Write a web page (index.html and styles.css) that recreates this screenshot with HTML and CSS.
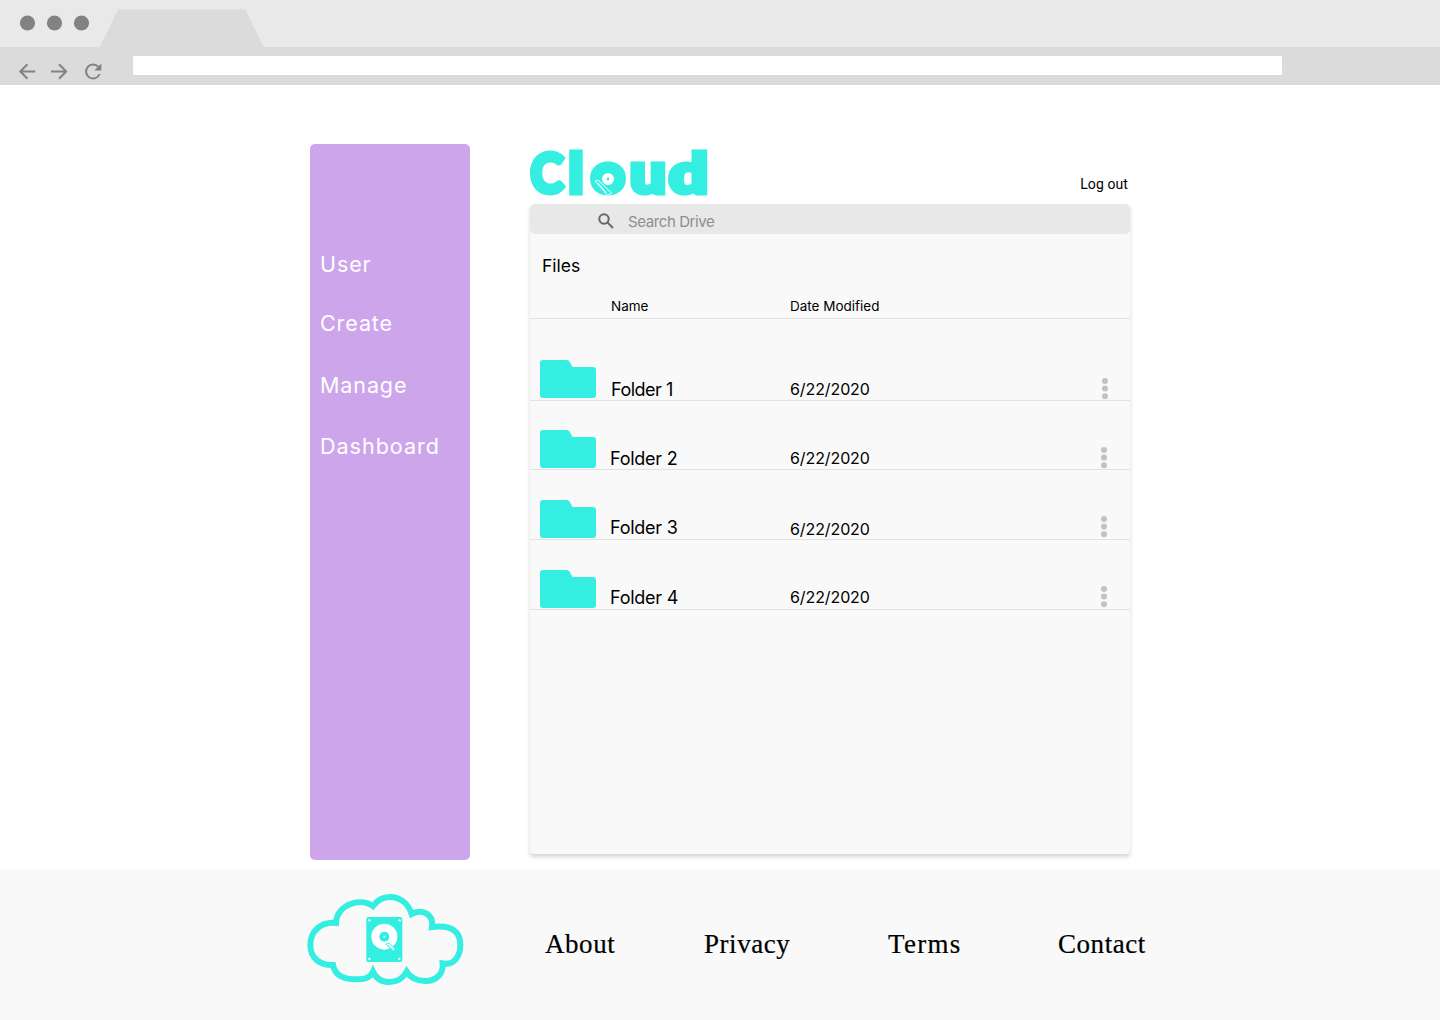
FILE: index.html
```html
<!DOCTYPE html>
<html lang="en">
<head>
<meta charset="utf-8">
<title>Cloud Drive</title>
<link rel="stylesheet" href="styles.css">
</head>
<body>
<svg class="defs" width="0" height="0" aria-hidden="true">
  <symbol id="folder" viewBox="0 0 56 38">
    <path d="M3 0H26.500Q28.500 0 29.500 1.500L32.500 7H53Q56 7 56 10V35Q56 38 53 38H3Q0 38 0 35V3Q0 0 3 0Z"/>
  </symbol>
  <symbol id="dots" viewBox="0 0 6 22">
    <circle cx="3" cy="3" r="3"/><circle cx="3" cy="10.600" r="3"/><circle cx="3" cy="18.200" r="3"/>
  </symbol>
</svg>
<header class="browser">
  <div class="tabs">
    <svg width="1440" height="47" viewBox="0 0 1440 47">
      <g fill="#828282"><circle cx="27.500" cy="23" r="7.600"/><circle cx="54.500" cy="23" r="7.600"/><circle cx="81.500" cy="23" r="7.600"/></g>
      <path d="M100 47L118 9.500H245.500L263.500 47Z" fill="#dbdbdb"/>
    </svg>
  </div>
  <div class="toolbar">
    <svg class="nav-icons" width="133" height="38" viewBox="0 47 133 38" fill="none" stroke="#828282" stroke-width="2">
      <path d="M35.300 71.500H20.500M27.500 64.300L20.300 71.500L27.500 78.700"/>
      <path d="M51 71.500H66M59 64.300L66.200 71.500L59 78.700"/>
      <path d="M99.600 74A7 7 0 1 1 98.300 66.800"/>
      <path d="M101.300 63.500V70.500H94.300Z" fill="#828282" stroke="none"/>
    </svg>
    <div class="address"></div>
  </div>
</header>
<main class="page">
  <nav class="sidebar">
    <a class="user">User</a>
    <a class="create">Create</a>
    <a class="manage">Manage</a>
    <a class="dashboard">Dashboard</a>
  </nav>
  <section class="content">
    <div class="masthead">
      <svg class="logo" width="190" height="60" viewBox="525 144 190 60">
        <g class="wordmark">
          <text x="530.500" y="192.500" textLength="33" lengthAdjust="spacingAndGlyphs">C</text>
          <text x="568.500" y="192.500" textLength="15" lengthAdjust="spacingAndGlyphs">l</text>
          <text x="591" y="192.500" textLength="34" lengthAdjust="spacingAndGlyphs">o</text>
          <text x="630" y="192.500" textLength="36" lengthAdjust="spacingAndGlyphs">u</text>
          <text x="669" y="192.500" textLength="39" lengthAdjust="spacingAndGlyphs">d</text>
        </g>
        <circle cx="608" cy="179" r="12" fill="#35eee2"/>
        <circle cx="608" cy="179" r="6" fill="#fff"/>
        <circle cx="608" cy="179" r="1.500" fill="#35eee2"/>
        <path d="M595 181Q597 179 599 181L611.500 193L608 195.500Q605 194 604 191Z" fill="#35eee2" stroke="#fff"/>
        <path d="M598 183L606.500 193" stroke="#fff" fill="none"/>
      </svg>
      <a class="logout">Log out</a>
    </div>
    <div class="drive">
      <div class="search">
        <svg width="16" height="16" viewBox="0 0 16 16" fill="none" stroke="#666" stroke-width="2"><circle cx="6" cy="6" r="4.700"/><path d="M9.600 9.600L15 15"/></svg>
        <span>Search Drive</span>
      </div>
      <h1 class="title">Files</h1>
      <div class="row head"><span></span><span class="name">Name</span><span class="date">Date Modified</span></div>
      <div class="row first">
        <svg class="folder"><use href="#folder"/></svg><span class="name">Folder 1</span><span class="date">6/22/2020</span><svg class="dots"><use href="#dots"/></svg>
      </div>
      <div class="row second">
        <svg class="folder"><use href="#folder"/></svg><span class="name">Folder 2</span><span class="date">6/22/2020</span><svg class="dots"><use href="#dots"/></svg>
      </div>
      <div class="row third">
        <svg class="folder"><use href="#folder"/></svg><span class="name">Folder 3</span><span class="date">6/22/2020</span><svg class="dots"><use href="#dots"/></svg>
      </div>
      <div class="row fourth">
        <svg class="folder"><use href="#folder"/></svg><span class="name">Folder 4</span><span class="date">6/22/2020</span><svg class="dots"><use href="#dots"/></svg>
      </div>
    </div>
  </section>
</main>
<footer class="footer">
  <svg class="cloud" width="170" height="110" viewBox="0 0 510 330">
    <path d="M108 114C60 110 31 140 31 180C31 220 60 241 99 240C105 275 140 284 175 283C200 283 212 275 219 260C228 280 245 291 268 291C290 291 308 282 320 260C332 280 350 288 377 288C410 288 431 265 428 235C460 242 481 215 481 180C481 140 455 118 396 126C402 90 370 70 335 87C325 55 300 36 270 36C245 36 230 48 219 63C180 35 110 60 108 114Z" fill="none" stroke="#35eee2" stroke-width="18"/>
    <rect x="199" y="96" width="108" height="135" rx="6" fill="#35eee2"/>
    <g fill="#fff"><circle cx="208" cy="106" r="3.500"/><circle cx="299" cy="106" r="3.500"/><circle cx="208" cy="222" r="3.500"/><circle cx="298" cy="222" r="3.500"/><circle cx="253" cy="155" r="39"/></g>
    <circle cx="253" cy="155" r="15" fill="#35eee2"/><circle cx="253" cy="155" r="3" fill="#fff"/>
    <path d="M258 178Q260 172 268 175L286 192L280 199Z" fill="#fff" stroke="#35eee2" stroke-width="3"/>
    <path d="M263 179L281 196" stroke="#35eee2" stroke-width="2"/>
  </svg>
  <a>About</a><a>Privacy</a><a class="terms">Terms</a><a>Contact</a>
</footer>
</body>
</html>
```
FILE: styles.css
```css
* { box-sizing: border-box; }
body { margin: 0; width: 1440px; height: 1020px; overflow: hidden; background: #fff; color: #000; font-family: Inter, Roboto, sans-serif; }
svg { display: block; flex: none; }
.defs { position: absolute; }
.browser { height: 85px; background: #dbdbdb; }
.tabs { height: 47px; background: #e9e9e9; }
.toolbar { display: flex; height: 38px; }
.address { width: 1149px; height: 19px; margin-top: 9.400px; background: #fff; border-radius: 1px; }
.page { display: flex; height: 785px; padding: 59px 310px 0; }
.sidebar { display: flex; flex-direction: column; width: 160px; height: 716px; padding: 107px 0 0 10px; border-radius: 5px; background: #cda5eb; color: #fff; font-size: 21.500px; line-height: 26px; letter-spacing: .9px; }
.user { margin-bottom: 33px; }
.create { margin-bottom: 36px; }
.manage { margin-bottom: 35px; }
.dashboard { letter-spacing: 1px; }
.content { width: 600px; margin-left: 60px; }
.masthead { display: flex; justify-content: space-between; height: 60px; padding-right: 2px; }
.logo { margin-left: -5px; overflow: visible; }
.wordmark { font-family: Lato, sans-serif; font-weight: 900; font-size: 55px; fill: #35eee2; stroke: #35eee2; stroke-width: 5px; }
.logout { margin-top: 32px; font: 14px/16px Roboto, sans-serif; letter-spacing: .1px; }
.drive { height: 650px; border-radius: 4px; background: #f9f9f9; box-shadow: 0 3px 4px rgba(0, 0, 0, .17); }
.search { display: flex; gap: 14px; height: 30px; padding: 9px 0 0 68px; border-radius: 5px; background: #e8e8e8; color: #8e8e8e; font-size: 15px; line-height: 17px; letter-spacing: -.4px; }
.title { height: 54px; margin: 0; padding: 21px 0 0 12px; font-size: 17.500px; line-height: 22px; font-weight: 400; }
.row { display: grid; grid-template-columns: 71px 179px 312px 6px; align-items: end; height: 70px; padding-left: 10px; border-bottom: 1px solid #e2e2e2; font-size: 18px; line-height: 20px; letter-spacing: -.5px; }
.head { height: 31px; font-size: 13.500px; letter-spacing: 0; padding-bottom: 2px; }
.first { height: 82px; }
.second { height: 69px; }
.folder { width: 56px; height: 38px; margin-bottom: 1px; fill: #35eee2; }
.first .folder { margin-bottom: 2px; }
.row:not(.head) .date { font-size: 16px; letter-spacing: -.1px; margin-bottom: 1px; }
.second .name, .third .name, .fourth .name { margin-left: -1px; letter-spacing: -.25px; }
.third .name, .fourth .name { margin-bottom: 1px; }
.row.third .date { margin-bottom: 0; }
.row.fourth .date { margin-bottom: 2px; }
.dots { width: 6px; height: 22px; margin: 0 0 0 -1px; fill: #c2c2c2; }
.first .dots { margin: 0; }
.third .dots, .fourth .dots { margin-bottom: 1px; }
.footer { display: grid; grid-template-columns: 245px 159px 184px 170px 100px; height: 150px; padding-left: 300px; background: #f9f9f9; }
.cloud { margin-top: 15px; }
.footer a { padding-top: 59px; font: 27px/30px "Liberation Serif", serif; letter-spacing: .55px; -webkit-text-stroke: .2px #000; }
.footer .terms { letter-spacing: 1.300px; }
```
